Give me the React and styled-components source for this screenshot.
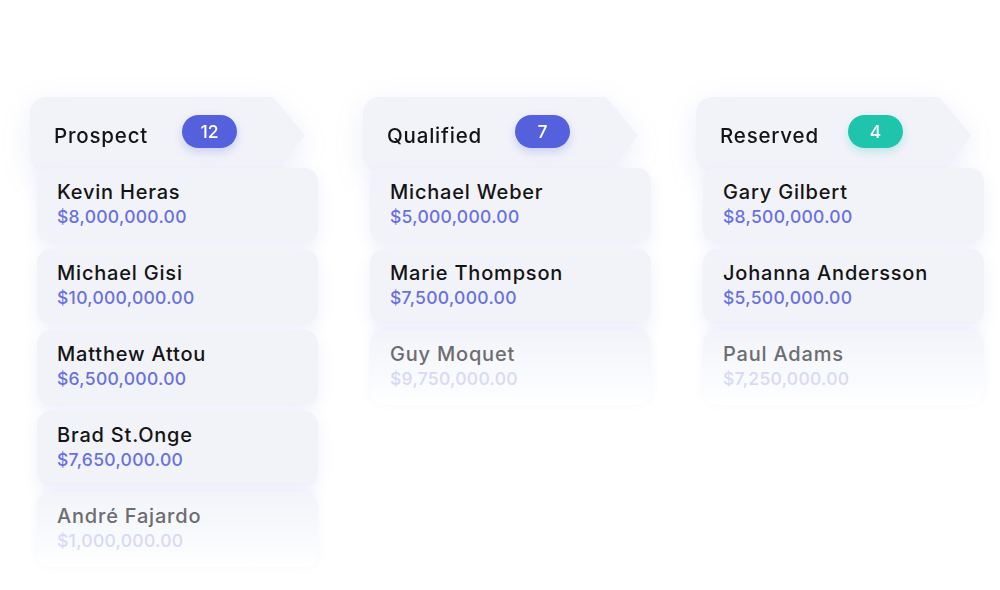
import React from "react";
import styled, { createGlobalStyle } from "styled-components";

const GlobalStyle = createGlobalStyle`
  html, body {
    margin: 0;
    padding: 0;
    background: #ffffff;
  }
  body {
    font-family: Inter, "Noto Sans", "DejaVu Sans", sans-serif;
    -webkit-font-smoothing: antialiased;
  }
`;

const Board = styled.div`
  display: flex;
  gap: 45px;
  padding: 97px 0 0 30px;
  width: 1000px;
  height: 590px;
  box-sizing: border-box;
  overflow: hidden;
`;

const Column = styled.div`
  width: 288px;
  display: flex;
  flex-direction: column;
`;

const HeaderWrap = styled.div`
  position: relative;
  z-index: 1;
  width: 275px;
  filter: drop-shadow(0 8px 14px rgba(92, 104, 226, 0.12));
`;

const Header = styled.div`
  height: 75px;
  display: flex;
  align-items: center;
  padding-left: 24px;
  background: #f2f3f9;
  border-radius: 16px;
  clip-path: polygon(
    0 0,
    calc(100% - 32px) 0,
    100% 51%,
    calc(100% - 28px) 100%,
    0 100%
  );
`;

const Title = styled.span`
  width: 128px;
  font-size: 20.5px;
  font-weight: 500;
  color: #141414;
  letter-spacing: 0.8px;
  padding-top: 2px;
`;

const Badge = styled.span`
  width: 55px;
  height: 33px;
  border-radius: 17px;
  background: ${(p) => p.color};
  color: #ffffff;
  font-size: 17.5px;
  font-weight: 500;
  display: flex;
  align-items: center;
  justify-content: center;
  margin-top: -6px;
  box-shadow: 0 4px 10px ${(p) => p.shadow};
`;

const Cards = styled.div`
  display: flex;
  flex-direction: column;
  gap: 6px;
  margin-top: -4px;
  margin-left: 7px;
  position: relative;
  z-index: 2;
`;

const Card = styled.div`
  height: 75px;
  box-sizing: border-box;
  border-radius: 14px;
  background: #f2f3f9;
  box-shadow: 0 6px 16px rgba(92, 104, 226, 0.1);
  padding: 12px 0 0 20px;
  display: flex;
  flex-direction: column;
  gap: 2px;
  ${(p) =>
    p.faded &&
    `
    background: linear-gradient(to bottom, #f3f4f9 0%, #fafbfe 70%, #ffffff 100%);
    box-shadow: 0 -2px 10px rgba(92, 104, 226, 0.07);
  `}
`;

const Name = styled.div`
  font-size: 20px;
  line-height: 24px;
  font-weight: 500;
  color: ${(p) => (p.faded ? "#6d6d70" : "#141414")};
  letter-spacing: 0.8px;
`;

const Amount = styled.div`
  font-size: 17.5px;
  line-height: 22px;
  font-weight: 500;
  color: ${(p) => (p.faded ? "#d6d9f6" : "#6870e2")};
  letter-spacing: 0.3px;
`;

const columns = [
  {
    title: "Prospect",
    count: 12,
    color: "#5560dd",
    shadow: "rgba(85, 96, 221, 0.25)",
    deals: [
      ["Kevin Heras", "$8,000,000.00"],
      ["Michael Gisi", "$10,000,000.00"],
      ["Matthew Attou", "$6,500,000.00"],
      ["Brad St.Onge", "$7,650,000.00"],
      ["André Fajardo", "$1,000,000.00"],
    ],
  },
  {
    title: "Qualified",
    count: 7,
    color: "#5560dd",
    shadow: "rgba(85, 96, 221, 0.25)",
    deals: [
      ["Michael Weber", "$5,000,000.00"],
      ["Marie Thompson", "$7,500,000.00"],
      ["Guy Moquet", "$9,750,000.00"],
    ],
  },
  {
    title: "Reserved",
    count: 4,
    color: "#1fc4ad",
    shadow: "rgba(31, 196, 173, 0.25)",
    deals: [
      ["Gary Gilbert", "$8,500,000.00"],
      ["Johanna Andersson", "$5,500,000.00"],
      ["Paul Adams", "$7,250,000.00"],
    ],
  },
];

export default function App() {
  return (
    <>
      <GlobalStyle />
      <Board>
        {columns.map((col) => (
          <Column key={col.title}>
            <HeaderWrap>
              <Header>
                <Title>{col.title}</Title>
                <Badge color={col.color} shadow={col.shadow}>
                  {col.count}
                </Badge>
              </Header>
            </HeaderWrap>
            <Cards>
              {col.deals.map(([name, amount], i) => {
                const faded = i === col.deals.length - 1;
                return (
                  <Card key={name} faded={faded}>
                    <Name faded={faded}>{name}</Name>
                    <Amount faded={faded}>{amount}</Amount>
                  </Card>
                );
              })}
            </Cards>
          </Column>
        ))}
      </Board>
    </>
  );
}
